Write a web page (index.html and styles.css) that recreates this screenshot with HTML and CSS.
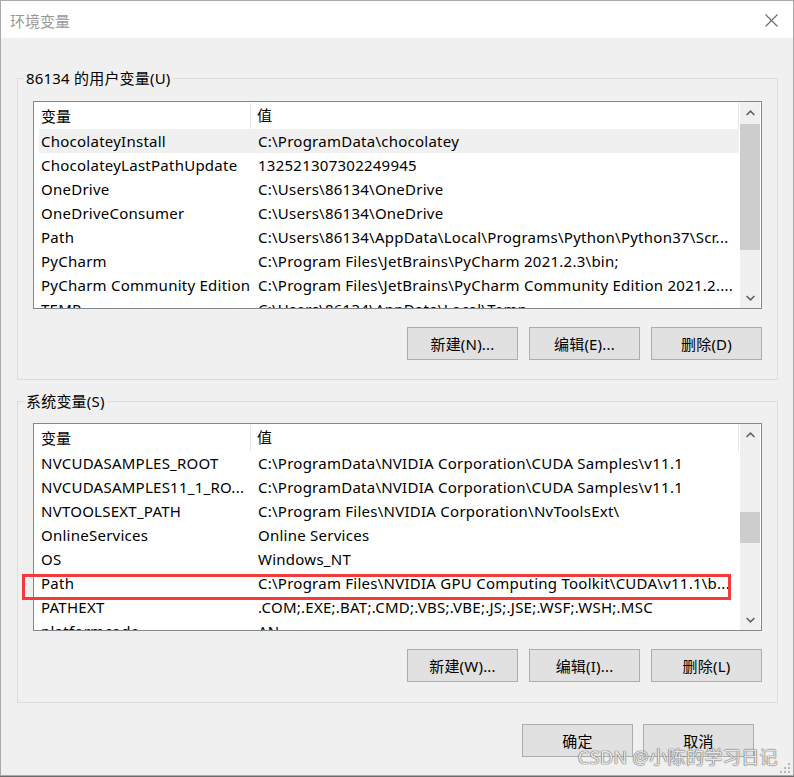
FILE: index.html
```html
<!DOCTYPE html>
<html lang="zh-CN">
<head>
    <meta charset="UTF-8">
    <title>环境变量</title>
    <link rel="stylesheet" href="styles.css">
</head>
<body>

    <div class="window">
        <div class="titlebar">
            <span class="title">环境变量</span>
            <svg class="close" width="13" height="13" viewBox="0 0 13 13">
                <path d="M0.5 0.5 L12.5 12.5 M12.5 0.5 L0.5 12.5" stroke="#6a6a6a" stroke-width="1.1" fill="none"/>
            </svg>
        </div>

        <div class="content">
            <!-- Пользовательские переменные -->
            <fieldset class="group group-user">
                <legend>86134 的用户变量(U)</legend>
                <div class="list">
                    <div class="list-view">
                        <div class="list-head">
                            <div class="col-name">变量</div>
                            <div class="col-value">值</div>
                        </div>
                        <div class="row selected"><div class="col-name">ChocolateyInstall</div><div class="col-value">C:\ProgramData\chocolatey</div></div>
                        <div class="row"><div class="col-name">ChocolateyLastPathUpdate</div><div class="col-value">132521307302249945</div></div>
                        <div class="row"><div class="col-name">OneDrive</div><div class="col-value">C:\Users\86134\OneDrive</div></div>
                        <div class="row"><div class="col-name">OneDriveConsumer</div><div class="col-value">C:\Users\86134\OneDrive</div></div>
                        <div class="row"><div class="col-name">Path</div><div class="col-value">C:\Users\86134\AppData\Local\Programs\Python\Python37\Scr...</div></div>
                        <div class="row"><div class="col-name">PyCharm</div><div class="col-value">C:\Program Files\JetBrains\PyCharm 2021.2.3\bin;</div></div>
                        <div class="row"><div class="col-name">PyCharm Community Edition</div><div class="col-value">C:\Program Files\JetBrains\PyCharm Community Edition 2021.2....</div></div>
                        <div class="row"><div class="col-name">TEMP</div><div class="col-value">C:\Users\86134\AppData\Local\Temp</div></div>
                    </div>
                    <div class="scrollbar">
                        <div class="arrow"><svg width="9" height="6" viewBox="0 0 9 6"><path d="M0.6 5 L4.5 1.2 L8.4 5" stroke="#606060" stroke-width="1.6" fill="none"/></svg></div>
                        <div class="track"><div class="thumb thumb-user"></div></div>
                        <div class="arrow"><svg width="9" height="6" viewBox="0 0 9 6"><path d="M0.6 1 L4.5 4.8 L8.4 1" stroke="#606060" stroke-width="1.6" fill="none"/></svg></div>
                    </div>
                </div>
                <div class="buttons">
                    <button>新建(N)...</button>
                    <button>编辑(E)...</button>
                    <button>删除(D)</button>
                </div>
            </fieldset>

            <!-- Системные переменные -->
            <fieldset class="group group-system">
                <legend>系统变量(S)</legend>
                <div class="list">
                    <div class="list-view">
                        <div class="list-head">
                            <div class="col-name">变量</div>
                            <div class="col-value">值</div>
                        </div>
                        <div class="row"><div class="col-name">NVCUDASAMPLES_ROOT</div><div class="col-value">C:\ProgramData\NVIDIA Corporation\CUDA Samples\v11.1</div></div>
                        <div class="row"><div class="col-name">NVCUDASAMPLES11_1_RO...</div><div class="col-value">C:\ProgramData\NVIDIA Corporation\CUDA Samples\v11.1</div></div>
                        <div class="row"><div class="col-name">NVTOOLSEXT_PATH</div><div class="col-value">C:\Program Files\NVIDIA Corporation\NvToolsExt\</div></div>
                        <div class="row"><div class="col-name">OnlineServices</div><div class="col-value">Online Services</div></div>
                        <div class="row"><div class="col-name">OS</div><div class="col-value">Windows_NT</div></div>
                        <div class="row"><div class="col-name">Path</div><div class="col-value">C:\Program Files\NVIDIA GPU Computing Toolkit\CUDA\v11.1\b...</div></div>
                        <div class="row"><div class="col-name">PATHEXT</div><div class="col-value">.COM;.EXE;.BAT;.CMD;.VBS;.VBE;.JS;.JSE;.WSF;.WSH;.MSC</div></div>
                        <div class="row"><div class="col-name">platformcode</div><div class="col-value">AN</div></div>
                    </div>
                    <div class="scrollbar">
                        <div class="arrow"><svg width="9" height="6" viewBox="0 0 9 6"><path d="M0.6 5 L4.5 1.2 L8.4 5" stroke="#606060" stroke-width="1.6" fill="none"/></svg></div>
                        <div class="track"><div class="thumb thumb-system"></div></div>
                        <div class="arrow"><svg width="9" height="6" viewBox="0 0 9 6"><path d="M0.6 1 L4.5 4.8 L8.4 1" stroke="#606060" stroke-width="1.6" fill="none"/></svg></div>
                    </div>
                    <div class="highlight"></div> <!-- красная рамка вокруг Path -->
                </div>
                <div class="buttons">
                    <button>新建(W)...</button>
                    <button>编辑(I)...</button>
                    <button>删除(L)</button>
                </div>
            </fieldset>

            <div class="dialog-buttons">
                <button>确定</button>
                <button>取消</button>
            </div>
        </div>

        <div class="watermark">CSDN @小陈的学习日记</div>
        <svg class="grip" width="12" height="12" viewBox="0 0 12 12">
            <rect x="9" y="1" width="2" height="2" fill="#b8b8b8"/>
            <rect x="5" y="5" width="2" height="2" fill="#b8b8b8"/>
            <rect x="9" y="5" width="2" height="2" fill="#b8b8b8"/>
            <rect x="1" y="9" width="2" height="2" fill="#b8b8b8"/>
            <rect x="5" y="9" width="2" height="2" fill="#b8b8b8"/>
            <rect x="9" y="9" width="2" height="2" fill="#b8b8b8"/>
        </svg>
    </div>

</body>
</html>
```

FILE: styles.css
```css
/* Общие настройки страницы */
body {
    margin: 0;
    background: #6b6b6b;
    font-family: "Noto Sans", "Noto Sans CJK SC", sans-serif;
    font-size: 15px;
    color: #000;
}
.window {
    position: relative;
    width: 792px;
    height: 774px;
    border: 1px solid #a9a9a9;
    background: #f0f0f0;
    display: flex;
    flex-direction: column;
}
.titlebar {
    height: 37px;
    background: #fff;
    display: flex;
    align-items: center;
    justify-content: space-between;
    padding: 0 15px 0 9px;
}
.title {
    color: #999;
    font-size: 15px;
    margin-top: 2px;
}
.close {
    margin-top: 1px;
}
.content {
    padding: 0 15px 0 16px;
}

/* Рамки групп */
.group {
    margin: 30px 0 0 0;
    padding: 13px 15px 19px 15px;
    border: 1px solid #dcdcdc;
    min-width: 0;
}
.group-system {
    margin-top: 11px;
    padding-top: 12px;
    padding-bottom: 20px;
}
legend {
    padding: 0 2px;
    margin-left: -9px;
    line-height: 20px;
    letter-spacing: 0.2px;
}

/* Список переменных */
.list {
    position: relative;
    height: 206px;
    border: 1px solid #828790;
    background: #fff;
    display: flex;
}
.list-view {
    flex: 1;
    overflow: hidden;
}
.list-head {
    display: flex;
    height: 27px;
    line-height: 27px;
}
.list-head .col-name {
    width: 209px;
    padding-left: 7px;
    border-right: 1px solid #e5e5e5;
    margin: 1px 0 0 0;
}
.list-head .col-value {
    flex: 1;
    padding-left: 6px;
    border-right: 1px solid #e5e5e5;
    margin-right: 1px;
}
.row {
    display: flex;
    height: 24px;
    line-height: 24px;
    margin: 0 1px 0 5px;
    white-space: nowrap;
    letter-spacing: 0.25px;
}
.row.selected {
    background: #f0f0f0;
}
.row .col-name {
    width: 210px;
    padding-left: 2px;
    overflow: hidden;
}
.row .col-value {
    flex: 1;
    padding-left: 7px;
    overflow: hidden;
}

/* Полоса прокрутки */
.scrollbar {
    width: 20px;
    margin-right: 1px;
    background: #f0f0f0;
    display: flex;
    flex-direction: column;
}
.arrow {
    height: 21px;
    display: flex;
    align-items: center;
    justify-content: center;
}
.track {
    flex: 1;
}
.thumb {
    background: #cdcdcd;
}
.thumb-user {
    margin-top: 1px;
    height: 126px;
}
.thumb-system {
    margin-top: 67px;
    height: 31px;
}

/* Красная рамка */
.highlight {
    position: absolute;
    left: -12px;
    top: 150px;
    width: 703px;
    height: 20px;
    border: 3px solid #f43b3b;
}

/* Кнопки */
.buttons {
    display: flex;
    justify-content: flex-end;
    gap: 11px;
    margin-top: 18px;
}
button {
    width: 111px;
    height: 33px;
    background: #e1e1e1;
    border: 1px solid #adadad;
    font-family: "Noto Sans", "Noto Sans CJK SC", sans-serif;
    font-size: 15px;
    color: #000;
    padding: 0;
    letter-spacing: 0.2px;
}
.dialog-buttons {
    display: flex;
    justify-content: flex-end;
    gap: 10px;
    margin-top: 21px;
    padding-right: 24px;
}

/* Водяной знак CSDN */
.watermark {
    position: absolute;
    right: 15px;
    bottom: 6px;
    font-size: 18px;
    color: rgba(238, 238, 238, 0.95);
    text-shadow: 0 0 1px #707070, 0 0 1px #707070, 0 0 1px #707070;
    letter-spacing: 0.4px;
}
.grip {
    position: absolute;
    right: 2px;
    bottom: 1px;
}
```
